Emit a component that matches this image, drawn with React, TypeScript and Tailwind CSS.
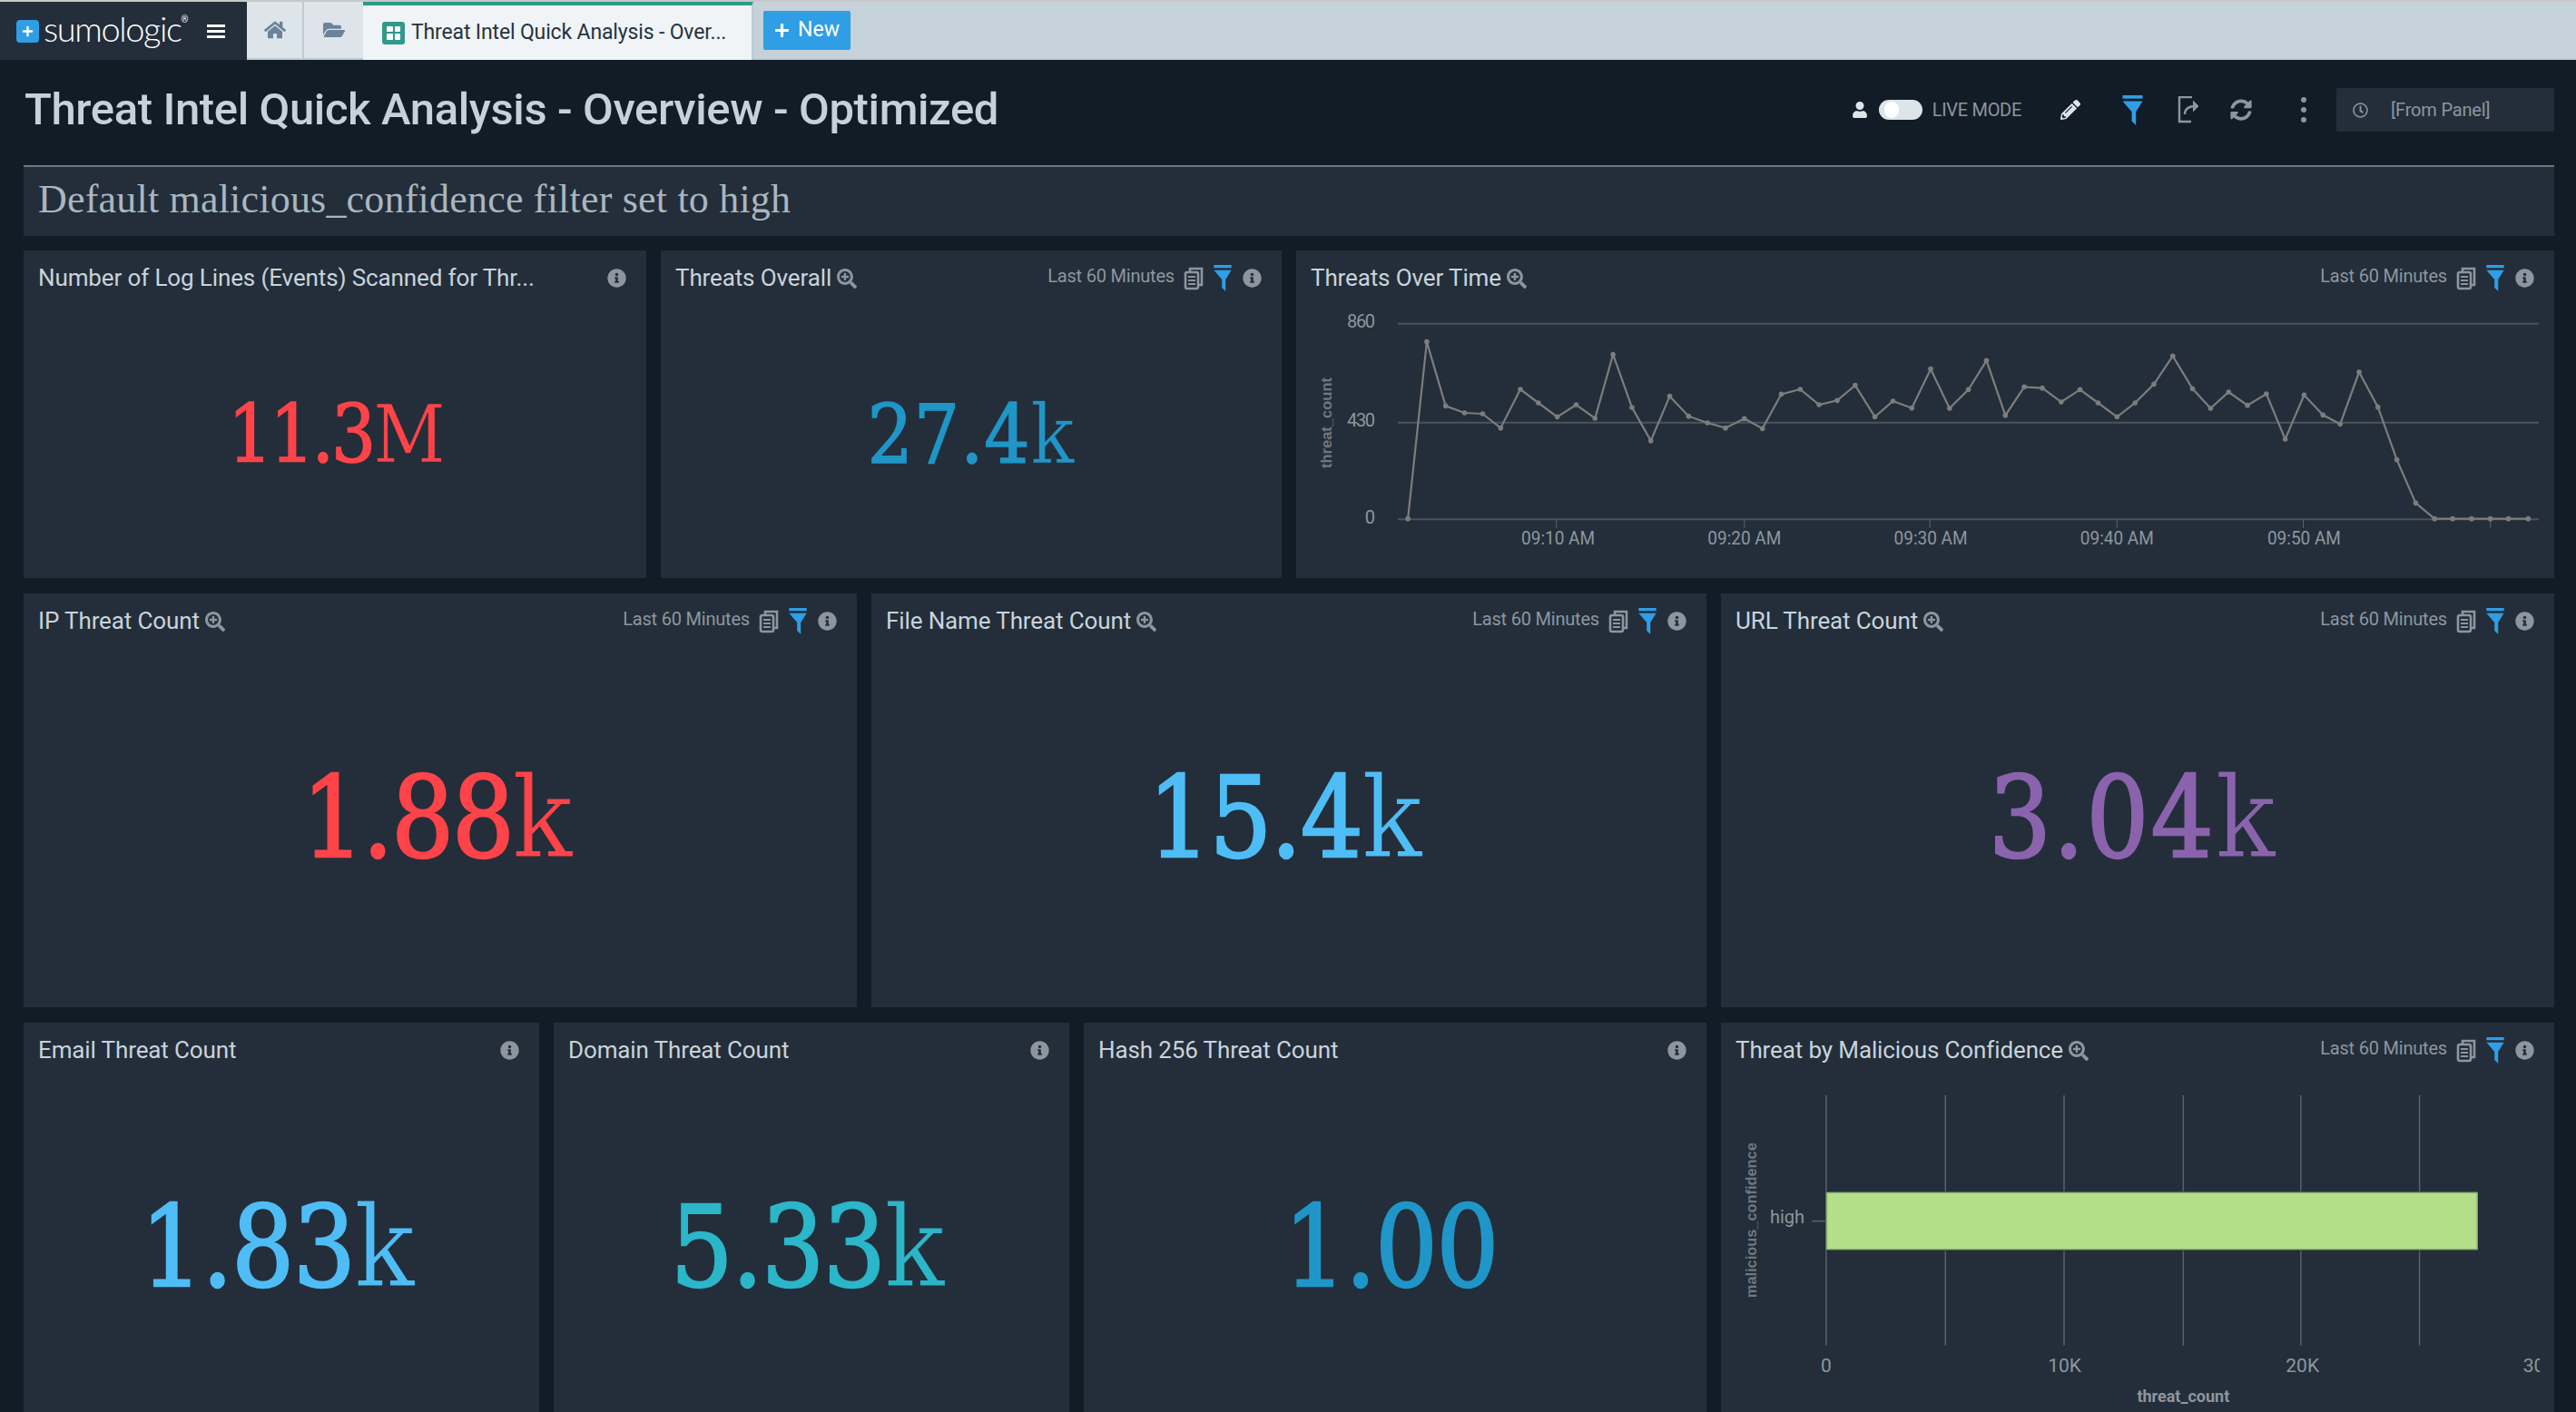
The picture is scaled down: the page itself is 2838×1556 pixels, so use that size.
import { FaHome, FaFolderOpen, FaUser, FaPencilAlt, FaInfoCircle, FaSearchPlus, FaSyncAlt, FaRegClock, FaPlus } from "react-icons/fa";
import { ReactNode } from "react";

function FilterIcon({ className }: { className: string }) {
  return (
    <svg viewBox="0 0 24 36" className={className} fill="#2f9ee5">
      <rect x="0" y="0" width="24" height="4" />
      <path d="M0 7h24l-8 13v16l-5-5V20z" />
    </svg>
  );
}

function CopyIcon() {
  return (
    <svg viewBox="0 0 22 26" className="w-[22px] h-[26px]" fill="none" stroke="#8d969e" strokeWidth="2.6">
      <path d="M7 5V2h13v18h-4" />
      <rect x="2" y="6" width="14" height="18" rx="2" />
      <path d="M5 11h8M5 15h8M5 19h8" strokeWidth="2.2" />
    </svg>
  );
}

function PanelIcons({ time = true }: { time?: boolean }) {
  return (
    <div className="flex items-center gap-[11px] shrink-0">
      {time && <span className="text-[20px] text-[#8d969e] tracking-[-0.2px] -mr-[1px] -mt-[6px]">Last 60 Minutes</span>}
      {time && <CopyIcon />}
      {time && <FilterIcon className="w-[20px] h-[29px]" />}
      <FaInfoCircle className="text-[#8d969e] text-[21px] ml-[1px]" />
    </div>
  );
}

function Panel({ title, zoom = true, time = true, className, children }: { title: string; zoom?: boolean; time?: boolean; className: string; children: ReactNode }) {
  return (
    <div className={"bg-[#232e3a] flex flex-col overflow-hidden " + className}>
      <div className="h-[56px] shrink-0 flex items-center justify-between pl-[16px] pr-[22px] pt-[5px]">
        <div className="flex items-center gap-[6px] min-w-0">
          <span className="text-[26px] text-[#c9d3da] tracking-[-0.12px] whitespace-nowrap">{title}</span>
          {zoom && <FaSearchPlus className="text-[#8d969e] text-[22px] shrink-0" />}
        </div>
        <PanelIcons time={time} />
      </div>
      {children}
    </div>
  );
}

function Value({ text, color, size, big = true, spacing = "tracking-[-2px]" }: { text: string; color: string; size: string; big?: boolean; spacing?: string }) {
  // the digits are heavier than the unit letter in the reference
  const digits = text.replace(/[a-zA-Z]+$/, "");
  const unit = text.slice(digits.length);
  return (
    <div className={"flex-1 flex items-center justify-center min-h-0 " + (big ? "pb-[18px] pr-[10px]" : "pb-[12px]")}>
      <span className={"font-['DejaVu_Serif',serif] scale-x-[0.88] " + spacing + " " + color + " " + size}>
        <span className={big ? "[-webkit-text-stroke:2.4px_currentColor]" : "[-webkit-text-stroke:1.6px_currentColor]"}>{digits}</span>
        <span className={big ? "[-webkit-text-stroke:1px_#232e3a]" : "[-webkit-text-stroke:0.7px_#232e3a]"}>{unit}</span>
      </span>
    </div>
  );
}

const linePoints: [number, number][] = [
  [145, 755], [168, 170], [191, 382], [214, 405], [236, 408], [258, 455], [282, 327], [304, 372], [327, 418], [350, 378],
  [373, 423], [395, 212], [418, 387], [441, 497], [464, 350], [487, 416], [510, 438], [532, 455], [555, 424], [577, 457],
  [600, 343], [623, 327], [646, 378], [668, 364], [690, 314], [714, 418], [736, 366], [759, 389], [782, 260], [805, 390],
  [828, 328], [850, 232], [873, 413], [896, 319], [918, 323], [941, 369], [964, 328], [986, 372], [1009, 418], [1031, 372],
  [1054, 310], [1077, 217], [1101, 325], [1123, 390], [1145, 336], [1168, 380], [1191, 342], [1214, 492], [1237, 346], [1260, 412],
  [1281, 442], [1304, 270], [1327, 386], [1350, 560], [1373, 703], [1396, 755], [1418, 755], [1441, 755], [1464, 755], [1486, 755], [1510, 755],
];

// chart coordinates come from the crop of the reference
const cx = (x: number) => x / 1.106 - 8;
const cy = (y: number) => y / 3 - 12;

function LineChart() {
  const pts = linePoints.map(([x, y]) => `${cx(x)},${cy(y)}`).join(" ");
  return (
    <svg viewBox="0 0 1384 305" className="w-[1384px] h-[305px] block" fontFamily="Roboto, sans-serif">
      {[110, 437, 757].map((y) => (
        <line key={y} x1={112} x2={1369} y1={cy(y)} y2={cy(y)} stroke="#4c545b" strokeWidth="2" />
      ))}
      {[326, 555, 781, 1009, 1236, 1464].map((x) => (
        <line key={x} x1={cx(x)} x2={cx(x)} y1={cy(757)} y2={cy(785)} stroke="#5c646b" />
      ))}
      {["860", "430", "0"].map((t, i) => (
        <text key={t} x={87} y={[29, 138, 245][i]} textAnchor="end" fontSize="20" fill="#8d969e" textLength={t.length > 1 ? 31 : undefined}>{t}</text>
      ))}
      {["09:10 AM", "09:20 AM", "09:30 AM", "09:40 AM", "09:50 AM"].map((t, i) => (
        <text key={t} x={cx([328, 555, 782, 1009, 1237][i])} y={268} textAnchor="middle" fontSize="20" fill="#8d969e" textLength={81} lengthAdjust="spacingAndGlyphs">{t}</text>
      ))}
      <text transform="translate(39 134) rotate(-90)" textAnchor="middle" fontSize="16" fontWeight="700" fill="#6f7880" fontFamily="'Liberation Sans', sans-serif" textLength={100} lengthAdjust="spacingAndGlyphs">threat_count</text>
      <polyline points={pts} fill="none" stroke="#7d7d7d" strokeWidth="2.2" />
      {linePoints.map(([x, y]) => (
        <circle key={x} cx={cx(x)} cy={cy(y)} r="2.8" fill="#7d7d7d" />
      ))}
    </svg>
  );
}

const bx = (x: number) => x / 1.637 - 16;
const by = (y: number) => y / 3 - 62;

function BarChart() {
  return (
    <svg viewBox="0 0 918 373" className="w-[918px] h-[373px] block" fontFamily="Roboto, sans-serif">
      <defs>
        <clipPath id="barClip"><rect x="0" y="0" width={bx(1503)} height="373" /></clipPath>
      </defs>
      {[216, 431, 645, 860, 1072, 1286].map((x) => (
        <line key={x} x1={bx(x)} x2={bx(x)} y1={by(258)} y2={by(1085)} stroke="#5b6167" strokeWidth="1.5" />
      ))}
      <rect x={bx(216)} y={by(575)} width={bx(1390) - bx(216) + 2} height={by(772) - by(575)} fill="#232e3a" />
      <rect x={bx(217)} y={by(580)} width={bx(1390) - bx(217)} height={by(767) - by(580)} fill="#b3df8a" stroke="#8fb26e" strokeWidth="1.5" />
      <line x1={bx(190)} x2={bx(215)} y1={by(674)} y2={by(674)} stroke="#5b6167" strokeWidth="1.5" />
      <text x={bx(177)} y={by(680)} textAnchor="end" fontSize="20" fill="#8d969e">high</text>
      <g clipPath="url(#barClip)" fontSize="21" fill="#8d969e" textAnchor="middle">
        <text x={bx(216)} y={by(1172)}>0</text>
        <text x={bx(646)} y={by(1172)}>10K</text>
        <text x={bx(1075)} y={by(1172)}>20K</text>
        <text x={bx(1503)} y={by(1172)}>30K</text>
      </g>
      <text x={bx(860)} y={by(1272)} textAnchor="middle" fontSize="18" fontWeight="700" fill="#8d969e">threat_count</text>
      <text transform={`translate(${bx(90)} ${by(671)}) rotate(-90)`} textAnchor="middle" fontSize="17" fontWeight="700" fill="#6f7880" fontFamily="'Liberation Sans', sans-serif" textLength={171} lengthAdjust="spacingAndGlyphs">malicious_confidence</text>
    </svg>
  );
}

export default function App() {
  return (
    <div className="w-[2838px] h-[1556px] overflow-hidden bg-[#121c27] font-[Roboto,sans-serif] flex flex-col">
      {/* top bar */}
      <div className="h-[66px] shrink-0 flex border-t-2 border-[#c8c8c8] bg-[#c5d2da]">
        <div className="w-[272px] bg-[#232e3a] flex items-center pl-[18px]">
          <span className="w-[25px] h-[25px] rounded-[4px] bg-[#2f9ee5] flex items-center justify-center">
            <FaPlus className="text-white text-[13px]" />
          </span>
          <span className="font-[Lato,sans-serif] font-light text-white text-[38px] tracking-[-1.4px] ml-[5px] -mt-[6px] leading-none">sumologic</span>
          <span className="text-white text-[10px] -mt-[26px]">®</span>
          <div className="ml-[21px] flex flex-col gap-[3px]">
            <div className="w-[20px] h-[3px] bg-white" />
            <div className="w-[20px] h-[3px] bg-white" />
            <div className="w-[20px] h-[3px] bg-white" />
          </div>
        </div>
        <div className="w-[63px] flex items-center justify-center bg-[#dde4ea] border-b-2 border-[#bccad5] border-r-2 border-r-[#bccad5]">
          <FaHome className="text-[#6b8299] text-[24px]" />
        </div>
        <div className="w-[65px] flex items-center justify-center bg-[#dde4ea] border-b-2 border-[#bccad5]">
          <FaFolderOpen className="text-[#6b8299] text-[24px]" />
        </div>
        <div className="w-[430px] bg-[#f0f4f6] border-t-[4px] border-[#30998b] flex items-center pl-[21px] border-r-2 border-r-[#bccad5]">
          <span className="w-[25px] h-[25px] rounded-[3px] bg-[#30998b] grid grid-cols-2 gap-[2px] p-[5px]">
            <i className="bg-white rounded-[1px]" /><i className="bg-white rounded-[1px]" /><i className="bg-white rounded-[1px]" /><i className="bg-white rounded-[1px]" />
          </span>
          <span className="text-[23px] text-[#263340] ml-[7px] tracking-[-0.15px] whitespace-nowrap">Threat Intel Quick Analysis - Over...</span>
        </div>
        <div className="flex-1 border-b-2 border-[#bccad5] flex items-start pl-[11px] pt-[10px]">
          <div className="w-[96px] h-[43px] bg-[#2f9ee5] rounded-[2px] flex items-center justify-center gap-[9px] text-white text-[23px]">
            <FaPlus className="text-[17px]" />
            <span>New</span>
          </div>
        </div>
      </div>

      {/* title row */}
      <div className="h-[116px] shrink-0 flex items-center justify-between pl-[27px] pr-[24px]">
        <h1 className="text-[49px] text-[#c5d2da] font-medium tracking-[-0.38px] whitespace-nowrap -mt-[6px]">Threat Intel Quick Analysis - Overview - Optimized</h1>
        <div className="flex items-center -mt-[6px]">
          <FaUser className="text-[#dde4ea] text-[18px]" />
          <div className="ml-[12px] w-[48px] h-[22px] rounded-full bg-[#dde4ea] flex items-center pl-[6px]">
            <div className="w-[16px] h-[18px] rounded-full bg-white" />
          </div>
          <span className="ml-[11px] text-[20px] text-[#8d969e] tracking-[-0.3px]">LIVE MODE</span>
          <FaPencilAlt className="ml-[43px] text-[#dde4ea] text-[22px]" />
          <FilterIcon className="ml-[46px] w-[23px] h-[33px]" />
          <svg viewBox="0 0 24 30" className="ml-[38px] w-[24px] h-[30px]" fill="none" stroke="#8d969e" strokeWidth="2.4">
            <path d="M16 1H2v27h13" />
            <path d="M8 20c0-6 4-9 12-9" />
            <path d="M17 5l6 6-6 6" fill="#8d969e" strokeWidth="1" />
          </svg>
          <FaSyncAlt className="ml-[34px] text-[#8d969e] text-[24px]" />
          <div className="ml-[54px] flex flex-col gap-[5px]">
            <div className="w-[6px] h-[6px] rounded-full bg-[#8d969e]" />
            <div className="w-[6px] h-[6px] rounded-full bg-[#8d969e]" />
            <div className="w-[6px] h-[6px] rounded-full bg-[#8d969e]" />
          </div>
          <div className="ml-[33px] w-[240px] h-[48px] rounded-[2px] bg-[#232e3a] flex items-center pl-[18px] text-[20px] text-[#8d969e]">
            <FaRegClock className="text-[17px]" />
            <span className="ml-[25px] tracking-[-0.2px]">[From Panel]</span>
          </div>
        </div>
      </div>

      {/* text panel */}
      <div className="mx-[26px] mr-[24px] h-[78px] shrink-0 bg-[#232e3a] border-t-2 border-[#6f7880] flex items-center pl-[16px] pb-[4px] font-['Liberation_Serif',serif] text-[44px] text-[#aab6bf] tracking-[0.2px]">
        Default malicious_confidence filter set to high
      </div>

      <div className="flex flex-col gap-[17px] pl-[26px] pr-[24px] pt-[16px]">
        <div className="flex gap-[16px] h-[361px]">
          <Panel title="Number of Log Lines (Events) Scanned for Thr..." zoom={false} time={false} className="w-[686px]">
            <Value text="11.3M" color="text-[#ff4449]" size="text-[88px]" big={false} spacing="tracking-[-3.5px]" />
          </Panel>
          <Panel title="Threats Overall" className="w-[684px]">
            <Value text="27.4k" color="text-[#1f96c7]" size="text-[90px]" big={false} spacing="tracking-[1px]" />
          </Panel>
          <Panel title="Threats Over Time" className="w-[1386px]">
            <LineChart />
          </Panel>
        </div>

        <div className="flex gap-[16px] h-[456px]">
          <Panel title="IP Threat Count" className="w-[918px]">
            <Value text="1.88k" color="text-[#ff4449]" size="text-[124px]" spacing="tracking-[-3px]" />
          </Panel>
          <Panel title="File Name Threat Count" className="w-[920px]">
            <Value text="15.4k" color="text-[#4fbdf5]" size="text-[124px]" />
          </Panel>
          <Panel title="URL Threat Count" className="w-[918px]">
            <Value text="3.04k" color="text-[#8b63ad]" size="text-[124px]" spacing="tracking-[2px]" />
          </Panel>
        </div>

        <div className="flex gap-[16px] h-[456px]">
          <Panel title="Email Threat Count" zoom={false} time={false} className="w-[568px]">
            <Value text="1.83k" color="text-[#4fbdf5]" size="text-[124px]" />
          </Panel>
          <Panel title="Domain Threat Count" zoom={false} time={false} className="w-[568px]">
            <Value text="5.33k" color="text-[#2bb6c9]" size="text-[124px]" />
          </Panel>
          <Panel title="Hash 256 Threat Count" zoom={false} time={false} className="w-[686px]">
            <Value text="1.00" color="text-[#1f96c7]" size="text-[124px]" />
          </Panel>
          <Panel title="Threat by Malicious Confidence" className="w-[918px]">
            <BarChart />
          </Panel>
        </div>
      </div>
    </div>
  );
}
